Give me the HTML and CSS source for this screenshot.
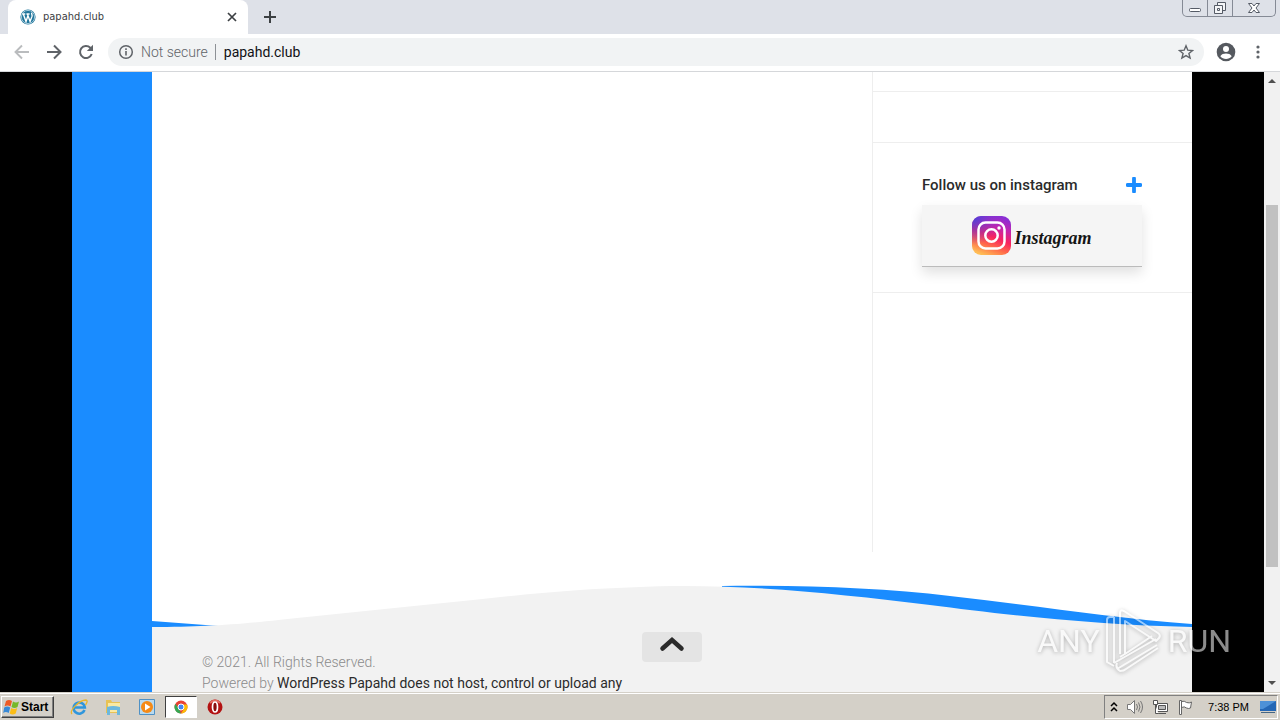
FILE: index.html
```html
<!DOCTYPE html>
<html lang="en">
<head>
<meta charset="utf-8">
<title>papahd.club</title>
<link rel="stylesheet" href="styles.css">
</head>
<body>
<header class="browser">
  <div class="tabstrip">
    <div class="tab">
      <svg class="favicon" width="16" height="16" viewBox="0 0 16 16"><circle cx="8" cy="8" r="7.6" fill="#21759b"/><circle cx="8" cy="8" r="6.6" fill="none" stroke="#d6ebf4" stroke-width=".7"/><path d="M2.3 5h3M6.4 5h3.2M3.3 5l2.7 7.5L8 6.5M7.4 5l2.7 7.5L12 7.4c.5-1.7-.7-2.2-.3-3.6" fill="none" stroke="#fff" stroke-width="1.4"/></svg>
      <span class="tab-title">papahd.club</span>
      <button class="icon-button" aria-label="Close tab"><svg width="10" height="10" viewBox="0 0 10 10"><path d="M1 1l8 8M9 1L1 9" stroke="#3c4043" stroke-width="1.7"/></svg></button>
    </div>
    <button class="icon-button new-tab" aria-label="New tab"><svg width="12" height="12" viewBox="0 0 12 12"><path d="M6 0v12M0 6h12" stroke="#3c4043" stroke-width="2"/></svg></button>
    <div class="window-controls">
      <button aria-label="Minimize"><svg width="14" height="14" viewBox="0 0 14 14"><rect x="1.500" y="7.500" width="11" height="3" rx="1" fill="#fff" stroke="#555b66"/></svg></button>
      <button aria-label="Restore"><svg width="14" height="14" viewBox="0 0 14 14" fill="#f4f5f7" stroke="#555b66"><path d="M4.500 1.500h8v8h-8z"/><path d="M1.500 4.500h8v8h-8z"/><path d="M4.500 7.500h2v2h-2z"/></svg></button>
      <button class="wide" aria-label="Close"><svg width="14" height="12" viewBox="0 0 14 12"><path d="M1.500 1.500h3.500l2 2.500 2-2.500h3.500L9 6l3.500 4.500H9L7 8l-2 2.500H1.500L5 6z" fill="#fff" stroke="#555b66"/></svg></button>
    </div>
  </div>
  <div class="toolbar">
    <button class="icon-button" aria-label="Back"><svg width="16" height="16" viewBox="0 0 16 16"><path d="M15 8H2M8 1.500L1.500 8 8 14.500" fill="none" stroke="#babcbe" stroke-width="1.900"/></svg></button>
    <button class="icon-button" aria-label="Forward"><svg width="16" height="16" viewBox="0 0 16 16"><path d="M1 8h13M8 1.500L14.500 8 8 14.500" fill="none" stroke="#5f6368" stroke-width="2"/></svg></button>
    <button class="icon-button" aria-label="Reload"><svg width="16" height="16" viewBox="0 0 16 16"><path d="M13.700 10A6 6 0 1 1 12.300 3.800L14 5.500" fill="none" stroke="#5f6368" stroke-width="2"/><path d="M15 .8V7H8.800z" fill="#5f6368"/></svg></button>
    <div class="address">
      <svg width="16" height="16" viewBox="0 0 16 16"><circle cx="8" cy="8" r="6.300" fill="none" stroke="#5f6368" stroke-width="1.500"/><path d="M8 7v4.500M8 4.300V6" stroke="#5f6368" stroke-width="1.600"/></svg>
      <span class="security">Not secure</span>
      <input class="url" type="text" value="papahd.club" aria-label="Address">
      <button class="icon-button" aria-label="Bookmark"><svg width="16" height="16" viewBox="0 0 16 16"><path d="M8 1.800l1.800 4.400 4.700.3-3.600 3 1.200 4.600L8 11.600l-4.100 2.500 1.200-4.600-3.600-3 4.700-.3z" fill="none" stroke="#5f6368" stroke-width="1.400"/></svg></button>
    </div>
    <button class="icon-button" aria-label="Profile"><svg width="20" height="20" viewBox="0 0 20 20"><circle cx="10" cy="10" r="9.300" fill="#55595f"/><circle cx="10" cy="7" r="3" fill="#fff"/><path d="M4.300 14.200c1-2 3.500-2.700 5.700-2.700s4.700.7 5.700 2.700c-2.800 3.600-8.600 3.600-11.400 0z" fill="#fff"/></svg></button>
    <button class="icon-button menu" aria-label="Menu"><svg width="4" height="14" viewBox="0 0 4 14" fill="#5f6368"><circle cx="2" cy="2" r="1.600"/><circle cx="2" cy="7" r="1.600"/><circle cx="2" cy="12" r="1.600"/></svg></button>
  </div>
</header>

<div class="viewport">
  <div class="page">
    <div class="site">
      <main class="columns">
        <div class="content"></div>
        <aside class="sidebar">
          <div class="widget widget-cut"></div>
          <div class="widget widget-empty"></div>
          <section class="widget widget-follow">
            <div class="widget-head">
              <h2>Follow us on instagram</h2>
              <svg width="16" height="16" viewBox="0 0 16 16"><path d="M8 1.500v13M1.500 8h13" stroke="#1a8cff" stroke-width="3.800" stroke-linecap="round"/></svg>
            </div>
            <a class="instagram" href="#">
              <svg width="39" height="39" viewBox="0 0 39 39">
                <defs>
                  <linearGradient id="ig-base" x1="0.300" y1="1" x2="0.700" y2="0"><stop offset="0" stop-color="#ffbd55"/><stop offset=".25" stop-color="#ff6a4a"/><stop offset=".48" stop-color="#f8245e"/><stop offset=".75" stop-color="#c226b0"/><stop offset="1" stop-color="#8a2fd4"/></linearGradient>
                  <radialGradient id="ig-blue" cx="0" cy="0" r=".75"><stop offset="0" stop-color="#3c45dc"/><stop offset="1" stop-color="#6a3ae0" stop-opacity="0"/></radialGradient>
                </defs>
                <rect width="39" height="39" rx="9" fill="url(#ig-base)"/><rect width="39" height="39" rx="9" fill="url(#ig-blue)"/>
                <rect x="6.500" y="6.500" width="26" height="26" rx="7" fill="none" stroke="#fff" stroke-width="2.500"/><circle cx="19.500" cy="19.500" r="6.200" fill="none" stroke="#fff" stroke-width="2.500"/><circle cx="27" cy="12" r="1.700" fill="#fff"/>
              </svg>
              <span>Instagram</span>
            </a>
          </section>
        </aside>
      </main>
      <footer class="footer">
        <svg class="wave" viewBox="0 0 1040 42" preserveAspectRatio="none">
          <path d="M0 36L80 42H0zM570 1C650 0 730 3 798 11C880 20 960 33 1040 39V42H570z" fill="#1a8cff"/>
          <path d="M0 42C60 42 90 39 155 32C210 26 265 21 321 15C377 9 430 3 520 1C600 0 690 9 778 20C848 29 940 40 1040 42z" fill="#f2f2f2"/>
        </svg>
        <div class="footer-body">
          <p class="copyright">© 2021. All Rights Reserved.<br>Powered by <a href="#">WordPress Papahd does not host, control or upload any</a></p>
          <button class="to-top" aria-label="Scroll to top"><svg width="26" height="18" viewBox="0 0 26 18"><path d="M3.500 12.500L13 4l9.500 8.500" fill="none" stroke="#2b2b2b" stroke-width="4.500" stroke-linecap="round"/></svg></button>
        </div>
      </footer>
    </div>
  </div>
  <div class="scrollbar">
    <svg width="16" height="16" viewBox="0 0 16 16"><path d="M4 11l4-4 4 4z" fill="#505050"/></svg>
    <div class="track"><div class="thumb"></div></div>
    <svg width="16" height="16" viewBox="0 0 16 16"><path d="M4 5l4 4 4-4z" fill="#505050"/></svg>
  </div>
  <div class="watermark">
    <span>ANY</span>
    <svg width="58" height="66" viewBox="0 0 58 66" fill="none" stroke="#fff" stroke-width="2" stroke-linejoin="round"><path d="M9 9H5q-3 0-3 3v42l7 4M9 9v46M15 46V5q0-4 4-2l34 22q3 2 1 5l-3 3-31-20v33l-5 3M20 46l27-18M9 55l42-24M12 61l40-24M12 55q-2 5 3 8 4 0 6-2l32-21"/></svg>
    <span>RUN</span>
  </div>
</div>

<nav class="taskbar">
  <button class="start"><svg width="17" height="16" viewBox="0 0 17 16"><path d="M3 2q3-2 6 0L7.500 7.500q-3-2-6 0z" fill="#ee5a24"/><path d="M10 2.500q3 2 6 0L14.500 8q-3 2-6 0z" fill="#76b82a"/><path d="M1.200 8.500q3-2 6 0L5.700 14q-3-2-5.500 0z" fill="#3889d6"/><path d="M8.200 9q3 2 6 0l-1.500 5.500q-3 2-6 0z" fill="#fbbd16"/></svg>Start</button>
  <div class="tasks">
    <button aria-label="Internet Explorer"><svg width="18" height="18" viewBox="0 0 18 18" fill="none"><path d="M14.500 12A5.600 5.600 0 1 1 14.800 9.500H5" stroke="#2f96dc" stroke-width="2.600"/><path d="M2 16C-1 13 9 2 16 2c2 .5 1 3-.5 5" stroke="#e9b52a" stroke-width="1.300"/></svg></button>
    <button aria-label="Explorer"><svg width="18" height="18" viewBox="0 0 18 18"><path d="M2 2h5l1 2h8v11H2z" fill="#e8c254"/><path d="M4 5h12v9H4z" fill="#fae9a2"/><path d="M3 9q6-2 13 0v8h-3v-5H6v5H3z" fill="#6db8dd"/></svg></button>
    <button aria-label="Media Player"><svg width="18" height="18" viewBox="0 0 18 18"><path d="M1.500 1.500h15v15h-15z" fill="#b9daef" stroke="#4f91c5"/><circle cx="9" cy="9" r="6" fill="#f58a16"/><path d="M7 5.500v7L12.500 9z" fill="#fff"/></svg></button>
    <button class="active" aria-label="Chrome"><svg width="14" height="14" viewBox="0 0 14 14"><circle cx="7" cy="7" r="6.500" fill="#e84335"/><path d="M1.400 3.700L5 9l2 4.500A6.500 6.500 0 0 1 1.400 3.700z" fill="#34a853"/><path d="M13 4.500H7l3 4.300-3 4.700a6.500 6.500 0 0 0 6-9z" fill="#fbbc05"/><circle cx="7" cy="7" r="3" fill="#4285f4" stroke="#fff"/></svg></button>
    <button aria-label="Opera"><svg width="16" height="16" viewBox="0 0 16 16"><circle cx="8" cy="8" r="7.500" fill="#b31212"/><path d="M3 4q5-5 10 0" stroke="#e46b60" stroke-width="2" fill="none"/><ellipse cx="8" cy="8" rx="2.500" ry="5" fill="#8a0d0d" stroke="#fff" stroke-width="1.700"/></svg></button>
  </div>
  <div class="tray">
    <svg width="8" height="12" viewBox="0 0 8 12"><path d="M1 5l3-3 3 3M1 10l3-3 3 3" stroke="#000" stroke-width="1.500" fill="none"/></svg>
    <svg width="18" height="16" viewBox="0 0 18 16" fill="none" stroke="#777"><path d="M1.500 5.500h3l4-4v13l-4-4h-3z" fill="#fff"/><path d="M10.500 5q2 3 0 6M12.500 3.500q3 4.500 0 9M14.500 2q4 6 0 12"/></svg>
    <svg width="17" height="16" viewBox="0 0 17 16" fill="#fff" stroke="#555"><path d="M4.500 4.500h11v8h-11z"/><path d="M6.500 6.500h7v4h-7z" fill="#bbb"/><path d="M6 14.500h8"/><path d="M1.500 1.500h4v4h-4zM3.500 6v8.500h3" /></svg>
    <svg width="17" height="16" viewBox="0 0 17 16" fill="#fff" stroke="#666"><path d="M2.500 15.500v-14h2v14zM4.500 2.500q3-1 5 1 3 1 5-.5l-1 6q-2 1-4 0-2-2-5-.5z"/></svg>
    <time>7:38 PM</time>
    <svg width="16" height="14" viewBox="0 0 16 14"><path d="M0 1h16v10H0z" fill="#2467b5"/><path d="M0 1h16L3 9H0z" fill="#4d91d7"/><path d="M1 12h14v1H1z" fill="#456684"/></svg>
  </div>
</nav>
</body>
</html>
```
FILE: styles.css
```css
* { box-sizing: border-box; }
body {
  margin: 0;
  height: 100vh;
  display: flex;
  flex-direction: column;
  overflow: hidden;
  font-family: Roboto, "Liberation Sans", sans-serif;
}
button { font: inherit; color: inherit; cursor: pointer; }
svg { display: block; flex: none; }
.icon-button { display: flex; padding: 0; border: 0; background: none; }

.tabstrip { display: flex; height: 34px; padding-left: 8px; background: #dee1e8; }
.tab {
  display: flex;
  align-items: center;
  width: 240px;
  padding: 0 11px 0 12px;
  gap: 7px;
  background: #fff;
  border-radius: 8px 8px 0 0;
}
.tab-title { flex: 1; font: 11px/14px "DejaVu Sans Condensed", "DejaVu Sans", sans-serif; color: #3c4043; }
.new-tab { align-self: center; margin-left: 16px; }
.window-controls {
  display: flex;
  height: 17px;
  margin: 0 4px 0 auto;
  border: 1px solid #858a95;
  border-top: 0;
  border-radius: 0 0 5px 5px;
}
.window-controls button {
  display: flex;
  align-items: center;
  justify-content: center;
  width: 25px;
  padding: 0;
  border: 0;
  border-right: 1px solid #858a95;
  background: none;
}
.window-controls .wide { width: 42px; border: 0; }

.toolbar {
  display: flex;
  align-items: center;
  height: 38px;
  padding: 0 20px 2px 14px;
  gap: 16px;
  background: #fff;
  border-bottom: 1px solid #d5d7da;
}
.address {
  display: flex;
  flex: 1;
  align-items: center;
  height: 28px;
  margin: 0 -4px 0 -2px;
  padding: 0 10px;
  border-radius: 14px;
  background: #f1f3f4;
  font-size: 14px;
}
.menu { margin-left: 4px; }
.toolbar .menu { margin-right: 0; }
.security { margin: 0 7px; color: #5f6368; font-weight: 300; }
.url {
  flex: 1;
  height: 16px;
  padding: 0 0 0 8px;
  border: 0;
  border-left: 1px solid #8d9196;
  background: none;
  color: #101114;
  font: 14px Roboto, sans-serif;
  outline: 0;
}

.viewport { position: relative; display: flex; flex: 1; min-height: 0; background: #000; }
.page { flex: 1; padding: 0 72px; overflow: hidden; }
.site { border-left: 80px solid #1a8cff; background: #fff; }
.columns { display: grid; grid-template-columns: 1fr 320px; padding-bottom: 33px; }
.sidebar { min-height: 480px; border-left: 1px solid #eee; }
.widget { border-bottom: 1px solid #eee; }
.widget-cut { height: 20px; }
.widget-empty { height: 51px; }
.widget-follow { padding: 32px 50px 25px 49px; }
.widget-head { display: flex; align-items: center; justify-content: space-between; height: 20px; margin-bottom: 10px; }
h2 { margin: 0; color: #2b2b2b; font-size: 15px; font-weight: 500; line-height: 20px; }
.instagram {
  display: flex;
  justify-content: center;
  align-items: center;
  gap: 3px;
  height: 62px;
  border-bottom: 1px solid #bbb;
  background: #f5f5f5;
  box-shadow: 0 6px 12px rgba(0, 0, 0, .12);
  color: #151515;
  text-decoration: none;
  font: italic bold 18px "Liberation Serif", serif;
}
.instagram span { padding-top: 6px; }

.wave { width: 100%; height: 42px; }
.footer-body { position: relative; min-height: 130px; padding: 25px 50px; background: #f2f2f2; }
.copyright { margin: 0; color: #8b8b8b; font-size: 14px; font-weight: 300; line-height: 21px; }
.copyright a { color: #2b2b2b; font-weight: 400; text-decoration: none; }
.to-top {
  position: absolute;
  top: 5px;
  left: 50%;
  display: flex;
  justify-content: center;
  width: 60px;
  height: 30px;
  margin-left: -30px;
  padding: 4px 0;
  border: 0;
  border-radius: 4px;
  background: #e4e4e4;
}

.scrollbar { display: flex; flex-direction: column; width: 16px; background: #f1f1f1; }
.track { flex: 1; padding: 117px 2px 0; }
.thumb { height: 362px; background: #c1c1c1; }
.watermark {
  position: absolute;
  right: 49px;
  bottom: 18px;
  display: flex;
  align-items: center;
  gap: 5px;
  color: #fff;
  font-size: 32px;
  font-weight: 400;
  opacity: .55;
  filter: drop-shadow(0 1px 2px rgba(0, 0, 0, .5));
  pointer-events: none;
}

.taskbar {
  display: flex;
  align-items: center;
  height: 28px;
  padding-top: 2px;
  background: #d4d0c8;
  box-shadow: inset 0 1px #d4d0c8, inset 0 2px #fff;
  font: 11px "Liberation Sans", sans-serif;
}
.start {
  display: flex;
  align-items: center;
  gap: 1px;
  width: 53px;
  height: 22px;
  margin-left: 1px;
  padding: 0 1px;
  border: 1px solid;
  border-color: #fff #404040 #404040 #fff;
  background: #d4d0c8;
  box-shadow: inset -1px -1px #808080;
  font: bold 12px "Liberation Sans", sans-serif;
}
.tasks { display: flex; flex: 1; margin-left: 8px; }
.tasks button {
  display: flex;
  align-items: center;
  justify-content: center;
  width: 34px;
  height: 22px;
  padding: 0;
  border: 0;
  background: none;
}
.tasks .active { width: 32px; margin: 0 1px; border: 1px solid; border-color: #404040 #fff #fff #404040; background: #fff; }
.tray {
  display: flex;
  align-items: center;
  height: 24px;
  margin-right: 2px;
  padding: 0 1px 0 5px;
  gap: 8px;
  border: 1px solid;
  border-color: #808080 #fff #fff #808080;
}
.tray time { margin: 0 3px 0 6px; }
```
